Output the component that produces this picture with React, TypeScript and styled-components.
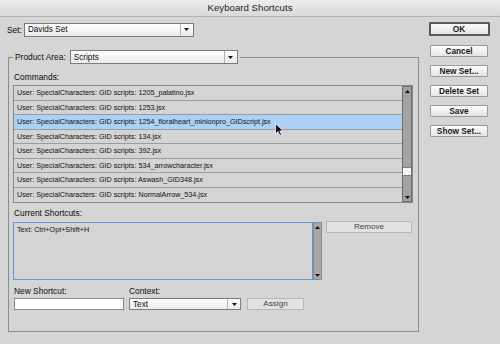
import React from 'react'
import styled, { createGlobalStyle } from 'styled-components'

const GlobalStyle = createGlobalStyle`
    html, body {
        margin: 0;
        padding: 0;
        background: #d5d5d5;
    }
    body {
        font-family: "Liberation Sans", Arial, sans-serif;
    }
`

const Window = styled.div`
    position: relative;
    width: 500px;
    height: 344px;
    overflow: hidden;
    background: #d5d5d5;
    color: #111;
    display: flex;
    flex-direction: column;
`
const TitleBar = styled.div`
    flex: none;
    height: 16px;
    background: linear-gradient(#ededed, #dadada);
    border-bottom: 1px solid #b2b2b2;
    text-align: center;
    font-size: 9.7px;
    line-height: 16px;
    color: #262626;
`
const Body = styled.div`
    display: flex;
    padding: 5px 0 0 7px;
`
const Main = styled.div`
    flex: none;
    width: 412px;
`
const SetRow = styled.div`
    display: flex;
    align-items: center;
    gap: 2px;
    height: 15px;
`
const Label = styled.span`
    display: block;
    font-size: 8.4px;
    line-height: 12px;
    color: #0c0c0c;
    white-space: nowrap;
`
const SelectBox = styled.div<{ $w: number; $h: number }>`
    width: ${p => p.$w}px;
    height: ${p => p.$h}px;
    box-sizing: border-box;
    border: 1px solid #7c7c7c;
    background: linear-gradient(#ffffff, #ebebeb);
    display: flex;
    align-items: center;
    font-size: 8.2px;
    color: #0c0c0c;
`
const SelectText = styled.span`
    flex: 1;
    padding-left: 3px;
    white-space: nowrap;
`
const SelectArrow = styled.span`
    align-self: stretch;
    width: 12px;
    border-left: 1px solid #b4b4b4;
    display: flex;
    align-items: center;
    justify-content: center;
`
const Group = styled.fieldset`
    box-sizing: border-box;
    width: 411px;
    margin: 13px 0 0 1px;
    padding: 0 5px 21px 4px;
    border: 1px solid #8c8c8c;
    min-width: 0;
`
const Legend = styled.legend`
    display: flex;
    align-items: center;
    gap: 4px;
    padding: 0 2px;
`
const SectionLabel = styled(Label)<{ $top: number }>`
    margin-top: ${p => p.$top}px;
    padding-left: 1px;
`
const CommandList = styled.div`
    margin-top: 2px;
    height: 118px;
    box-sizing: border-box;
    border: 1px solid #8a8a8a;
    display: flex;
`
const Rows = styled.div`
    flex: 1;
    display: flex;
    flex-direction: column;
`
const Row = styled.div<{ $selected?: boolean }>`
    height: 14.5px;
    box-sizing: border-box;
    border-bottom: 1px solid #9c9c9c;
    background: ${p => (p.$selected ? '#add0f7' : '#d4d4d4')};
    padding-left: 3px;
    font-size: 7.2px;
    line-height: 13.5px;
    color: #101010;
    white-space: nowrap;
    &:last-child {
        border-bottom: none;
    }
`
const ScrollBar = styled.div<{ $w: number }>`
    flex: none;
    width: ${p => p.$w}px;
    box-sizing: border-box;
    border: 1px solid #6d6d6d;
    background: #a3a3a3;
    display: flex;
    flex-direction: column;
`
const ScrollArrow = styled.div`
    flex: none;
    height: 8px;
    display: flex;
    align-items: center;
    justify-content: center;
`
const Track = styled.div<{ $thumbGap: number }>`
    flex: 1;
    display: flex;
    flex-direction: column;
    justify-content: flex-end;
    padding-bottom: ${p => p.$thumbGap}px;
`
const Thumb = styled.div`
    height: 7px;
    background: #f4f4f4;
    border-top: 1px solid #7a7a7a;
    border-bottom: 1px solid #7a7a7a;
`
const ShortcutRow = styled.div`
    display: flex;
    align-items: flex-start;
    margin-top: 3px;
`
const ShortcutBox = styled.div`
    width: 300px;
    height: 58px;
    box-sizing: border-box;
    border: 1px solid #5b9ad8;
    background: #d4d4d4;
`
const ShortcutScroll = styled(ScrollBar)`
    height: 58px;
    border-color: #8a8a8a;
    background: #a8a8a8;
`
const FlatButton = styled.div<{ $w: number; $ml: number; $mt?: number }>`
    width: ${p => p.$w}px;
    height: 12px;
    margin-left: ${p => p.$ml}px;
    margin-top: ${p => p.$mt ?? 0}px;
    box-sizing: border-box;
    border: 1px solid #b8b8b8;
    background: #e2e2e2;
    font-size: 8.1px;
    line-height: 10px;
    text-align: center;
    color: #444;
`
const BottomRow = styled.div`
    display: flex;
    align-items: flex-end;
    margin-top: 5px;
`
const Field = styled.div<{ $ml: number }>`
    display: flex;
    flex-direction: column;
    gap: 1px;
    margin-left: ${p => p.$ml}px;
`
const TextInput = styled.div`
    width: 110px;
    height: 12px;
    box-sizing: border-box;
    border: 1px solid #8a8a8a;
    background: #ffffff;
`
const Side = styled.div`
    display: flex;
    flex-direction: column;
    align-items: center;
    gap: 8px;
    margin-left: 9px;
    width: 62px;
`
const Button = styled.div<{ $default?: boolean }>`
    box-sizing: border-box;
    width: ${p => (p.$default ? 61 : 58)}px;
    height: ${p => (p.$default ? 14 : 12)}px;
    margin-bottom: ${p => (p.$default ? 1 : 0)}px;
    border: ${p => (p.$default ? '2px solid #5a5a5a' : '1px solid #9a9a9a')};
    border-radius: 1px;
    background: linear-gradient(#fcfcfc, #e4e4e4);
    font-size: 8.3px;
    font-weight: bold;
    line-height: 10px;
    text-align: center;
    color: #1a1a1a;
    white-space: nowrap;
`
const Cursor = styled.svg`
    position: absolute;
    left: 275px;
    top: 123px;
`

const Down = () => (
    <svg width="5" height="3" viewBox="0 0 5 3">
        <path d="M0 0h5L2.5 3z" fill="#111" />
    </svg>
)
const Up = () => (
    <svg width="5" height="3" viewBox="0 0 5 3">
        <path d="M0 3h5L2.5 0z" fill="#111" />
    </svg>
)

const Select: React.FC<{ value: string; width: number; height: number }> = ({ value, width, height }) => (
    <SelectBox $w={width} $h={height}>
        <SelectText>{value}</SelectText>
        <SelectArrow>
            <Down />
        </SelectArrow>
    </SelectBox>
)

const commands = [
    '1205_palatino.jsx',
    '1253.jsx',
    '1254_floralheart_minionpro_GIDscript.jsx',
    '134.jsx',
    '392.jsx',
    '534_arrowcharacter.jsx',
    'Aswash_GID348.jsx',
    'NormalArrow_534.jsx',
]

const sideButtons = ['Cancel', 'New Set...', 'Delete Set', 'Save', 'Show Set...']

const App: React.FC = () => {
    return (
        <Window>
            <GlobalStyle />
            <TitleBar>Keyboard Shortcuts</TitleBar>
            <Body>
                <Main>
                    <SetRow>
                        <Label>Set:</Label>
                        <Select value="Davids Set" width={170} height={14} />
                    </SetRow>
                    <Group>
                        <Legend>
                            <Label>Product Area:</Label>
                            <Select value="Scripts" width={168} height={14} />
                        </Legend>
                        <SectionLabel $top={7}>Commands:</SectionLabel>
                        <CommandList>
                            <Rows>
                                {commands.map((c, i) => (
                                    <Row key={c} $selected={i === 2}>
                                        User: SpecialCharacters: GID scripts: {c}
                                    </Row>
                                ))}
                            </Rows>
                            <ScrollBar $w={10}>
                                <ScrollArrow>
                                    <Up />
                                </ScrollArrow>
                                <Track $thumbGap={17}>
                                    <Thumb />
                                </Track>
                                <ScrollArrow>
                                    <Down />
                                </ScrollArrow>
                            </ScrollBar>
                        </CommandList>
                        <SectionLabel $top={4}>Current Shortcuts:</SectionLabel>
                        <ShortcutRow>
                            <ShortcutBox>
                                <Row>Text: Ctrl+Opt+Shift+H</Row>
                            </ShortcutBox>
                            <ShortcutScroll $w={9}>
                                <ScrollArrow>
                                    <Up />
                                </ScrollArrow>
                                <Track $thumbGap={0} />
                                <ScrollArrow>
                                    <Down />
                                </ScrollArrow>
                            </ShortcutScroll>
                            <FlatButton $w={86} $ml={4} $mt={-1}>
                                Remove
                            </FlatButton>
                        </ShortcutRow>
                        <BottomRow>
                            <Field $ml={1}>
                                <Label>New Shortcut:</Label>
                                <TextInput />
                            </Field>
                            <Field $ml={5}>
                                <Label>Context:</Label>
                                <Select value="Text" width={112} height={12} />
                            </Field>
                            <FlatButton $w={57} $ml={6}>
                                Assign
                            </FlatButton>
                        </BottomRow>
                    </Group>
                </Main>
                <Side>
                    <Button $default>OK</Button>
                    {sideButtons.map(b => (
                        <Button key={b}>{b}</Button>
                    ))}
                </Side>
            </Body>
            <Cursor width="9" height="13" viewBox="0 0 9 13">
                <path d="M0.5 0.5v10.5l2.5-2.4 1.8 3.9 1.8-0.8-1.8-3.8h3.5z" fill="#111" stroke="#fff" strokeWidth="0.8" />
            </Cursor>
        </Window>
    )
}

export default App
